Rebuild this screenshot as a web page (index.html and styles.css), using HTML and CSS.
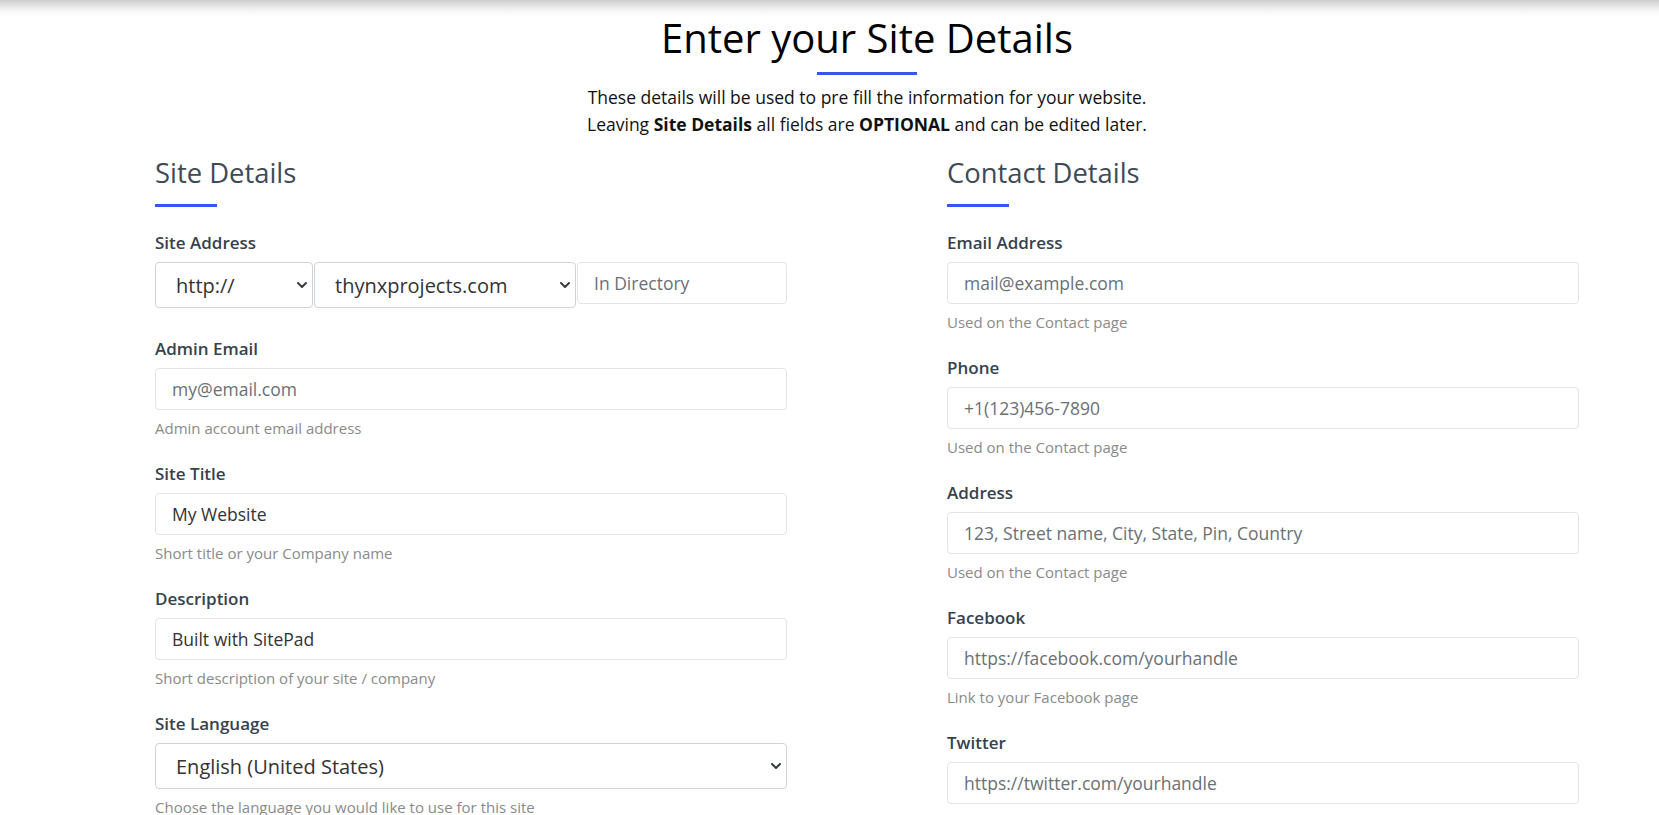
FILE: index.html
```html
<!DOCTYPE html>
<html lang="en">
<head>
<meta charset="utf-8">
<title>Enter your Site Details</title>
<link rel="stylesheet" href="styles.css">
</head>
<body>
<div class="page">
  <header class="intro">
    <h1 class="intro-title">Enter your Site Details</h1>
    <div class="intro-bar"></div>
    <p class="intro-text">These details will be used to pre fill the information for your website.<br>Leaving <b>Site Details</b> all fields are <b>OPTIONAL</b> and can be edited later.</p>
  </header>

  <div class="cols">
    <section class="col">
      <h2 class="sec-title">Site Details</h2>
      <div class="sec-bar"></div>

      <div class="field field-addr">
        <label class="lbl">Site Address</label>
        <div class="addr-row">
          <div class="sel sel-proto">
            <select class="sel-box"><option>http://</option></select>
            <svg class="chev" width="10" height="6" viewBox="0 0 10 6"><path d="M1 1l4 4 4-4" fill="none" stroke="#3a3f44" stroke-width="2" stroke-linecap="round" stroke-linejoin="round"/></svg>
          </div>
          <div class="sel sel-domain">
            <select class="sel-box"><option>thynxprojects.com</option></select>
            <svg class="chev" width="10" height="6" viewBox="0 0 10 6"><path d="M1 1l4 4 4-4" fill="none" stroke="#3a3f44" stroke-width="2" stroke-linecap="round" stroke-linejoin="round"/></svg>
          </div>
          <input class="inp inp-dir" type="text" placeholder="In Directory">
        </div>
      </div>

      <div class="field">
        <label class="lbl">Admin Email</label>
        <input class="inp" type="text" placeholder="my@email.com">
        <div class="help">Admin account email address</div>
      </div>

      <div class="field">
        <label class="lbl">Site Title</label>
        <input class="inp" type="text" value="My Website">
        <div class="help">Short title or your Company name</div>
      </div>

      <div class="field">
        <label class="lbl">Description</label>
        <input class="inp" type="text" value="Built with SitePad">
        <div class="help">Short description of your site / company</div>
      </div>

      <div class="field">
        <label class="lbl">Site Language</label>
        <div class="sel sel-lang">
          <select class="sel-box"><option>English (United States)</option></select>
          <svg class="chev" width="10" height="6" viewBox="0 0 10 6"><path d="M1 1l4 4 4-4" fill="none" stroke="#3a3f44" stroke-width="2" stroke-linecap="round" stroke-linejoin="round"/></svg>
        </div>
        <div class="help">Choose the language you would like to use for this site</div>
      </div>
    </section>

    <section class="col">
      <h2 class="sec-title">Contact Details</h2>
      <div class="sec-bar"></div>

      <div class="field">
        <label class="lbl">Email Address</label>
        <input class="inp" type="text" placeholder="mail@example.com">
        <div class="help">Used on the Contact page</div>
      </div>

      <div class="field">
        <label class="lbl">Phone</label>
        <input class="inp" type="text" placeholder="+1(123)456-7890">
        <div class="help">Used on the Contact page</div>
      </div>

      <div class="field">
        <label class="lbl">Address</label>
        <input class="inp" type="text" placeholder="123, Street name, City, State, Pin, Country">
        <div class="help">Used on the Contact page</div>
      </div>

      <div class="field">
        <label class="lbl">Facebook</label>
        <input class="inp" type="text" placeholder="https://facebook.com/yourhandle">
        <div class="help">Link to your Facebook page</div>
      </div>

      <div class="field">
        <label class="lbl">Twitter</label>
        <input class="inp" type="text" placeholder="https://twitter.com/yourhandle">
        <div class="help">Link to your Twitter page</div>
      </div>
    </section>
  </div>
</div>
</body>
</html>
```

FILE: styles.css
```css
html, body {
  margin: 0;
  padding: 0;
}

body {
  font-family: "Open Sans", "DejaVu Sans", sans-serif;
  color: #222;
  background: #fff linear-gradient(#cdcdcd, #f4f4f4 10px, #fff 16px) no-repeat 0 0 / 100% 16px;
}

.page {
  width: 1424px;
  margin-left: 155px;
}

.intro {
  text-align: center;
  padding-top: 14px;
}

.intro-title {
  margin: 0;
  font-size: 40px;
  line-height: 48px;
  font-weight: 400;
  color: #000;
}

.intro-bar {
  width: 100px;
  height: 3px;
  margin: 10px auto 0;
  background: #3457f0;
}

.intro-text {
  margin: 9px 0 0;
  font-size: 17.5px;
  line-height: 27px;
  color: #111;
}

.intro-text b {
  font-weight: 700;
}

.cols {
  display: grid;
  grid-template-columns: 632px 632px;
  column-gap: 160px;
  margin-top: 18px;
}

.sec-title {
  margin: 0;
  font-size: 27.4px;
  line-height: 34px;
  font-weight: 400;
  color: #3e4a56;
}

.sec-bar {
  width: 62px;
  height: 3px;
  margin: 14px 0 24px;
  background: #3457f0;
}

.field {
  margin-bottom: 23px;
}

.field-addr {
  margin-bottom: 29px;
}

.lbl {
  display: block;
  margin-bottom: 7px;
  font-size: 17px;
  line-height: 24px;
  font-weight: 600;
  color: #36424d;
}

.inp {
  display: block;
  box-sizing: border-box;
  width: 100%;
  height: 42px;
  margin: 0;
  padding: 0 16px;
  border: 1px solid #e2e4e7;
  border-radius: 4px;
  background: #fff;
  font-family: "Open Sans", "DejaVu Sans", sans-serif;
  font-size: 17.5px;
  color: #333;
  outline: none;
}

.inp::placeholder {
  color: #6b7075;
  opacity: 1;
}

.help {
  margin-top: 8px;
  font-size: 15px;
  line-height: 21px;
  color: #8a8a8a;
}

.addr-row {
  display: flex;
  align-items: flex-start;
  gap: 1px;
}

.sel {
  position: relative;
}

.sel-proto {
  width: 158px;
  flex: none;
}

.sel-domain {
  width: 262px;
  flex: none;
}

.inp-dir {
  flex: 1;
  width: auto;
  min-width: 0;
}

.sel-box {
  display: block;
  box-sizing: border-box;
  width: 100%;
  height: 46px;
  margin: 0;
  padding: 0 30px 0 20px;
  border: 1px solid #cfd3d8;
  border-radius: 4px;
  background: #fff;
  font-family: "Open Sans", "DejaVu Sans", sans-serif;
  font-size: 20px;
  color: #333;
  -webkit-appearance: none;
  appearance: none;
  outline: none;
}

.chev {
  position: absolute;
  right: 6px;
  top: 20px;
  pointer-events: none;
}
```
